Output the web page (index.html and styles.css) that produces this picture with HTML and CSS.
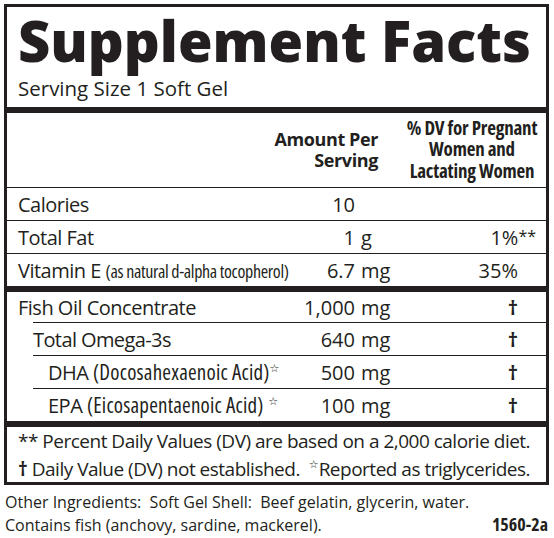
FILE: index.html
```html
<!DOCTYPE html>
<html lang="en">
<head>
    <meta charset="UTF-8" />
    <meta name="viewport" content="width=device-width, initial-scale=1.0" />
    <title>Supplement Facts</title>
    <link rel="stylesheet" href="styles.css">
</head>
<body>
    <div class="label">
      <div class="label-top">
        <h1 class="title">Supplement Facts</h1>
        <p class="serving">Serving Size 1 Soft Gel</p>
      </div>

      <!-- Column headings -->
      <div class="col-head">
        <div class="col-amount">Amount Per<br>Serving</div>
        <div class="col-dv">% DV for Pregnant<br>Women and<br>Lactating Women</div>
      </div>

      <div class="group">
        <div class="row">
          <span class="name">Calories</span>
          <span class="num">10</span>
          <span class="unit"></span>
          <span class="dv"></span>
        </div>
        <div class="row">
          <span class="name">Total Fat</span>
          <span class="num">1</span>
          <span class="unit">g</span>
          <span class="dv">1%<span class="dv-note">**</span></span>
        </div>
        <div class="row">
          <span class="name">Vitamin E <span class="paren">(as natural d-alpha tocopherol)</span></span>
          <span class="num">6.7</span>
          <span class="unit">mg</span>
          <span class="dv">35%</span>
        </div>
      </div>

      <div class="group group-thick">
        <div class="row">
          <span class="name">Fish Oil Concentrate</span>
          <span class="num">1,000</span>
          <span class="unit">mg</span>
          <span class="dv"><span class="dagger">†</span></span>
        </div>
        <div class="row sub">
          <span class="name tight">Total Omega-3s</span>
          <span class="num">640</span>
          <span class="unit">mg</span>
          <span class="dv"><span class="dagger">†</span></span>
        </div>
        <div class="row sub sub-2">
          <span class="name">DHA <span class="paren paren-wide">(Docosahexaenoic Acid)</span><span class="star">☆</span></span>
          <span class="num">500</span>
          <span class="unit">mg</span>
          <span class="dv"><span class="dagger">†</span></span>
        </div>
        <div class="row sub sub-2">
          <span class="name">EPA <span class="paren paren-wide">(Eicosapentaenoic Acid)</span> <span class="star">☆</span></span>
          <span class="num">100</span>
          <span class="unit">mg</span>
          <span class="dv"><span class="dagger">†</span></span>
        </div>
      </div>

      <div class="notes">
        <p>** Percent Daily Values (DV) are based on a 2,000 calorie diet.</p>
        <p><span class="dagger">†</span> Daily Value (DV) not established.&nbsp; <span class="star">☆</span>Reported as triglycerides.</p>
      </div>
    </div>

    <div class="other">
      <p>Other Ingredients:&nbsp; Soft Gel Shell:&nbsp; Beef gelatin, glycerin, water.</p>
      <p class="other-last">
        <span>Contains fish (anchovy, sardine, mackerel).</span>
        <span class="code">1560-2a</span>
      </p>
    </div>
</body>
</html>
```

FILE: styles.css
```css
* {
  margin: 0;
  padding: 0;
  box-sizing: border-box;
}

body {
  font-family: "Open Sans", "Liberation Sans", sans-serif;
  color: #231f20;
  background-color: #ffffff;
}

/* Outer label box */
.label {
  margin: 4px 5px 0 4px;
  border: 3px solid #231f20;
}

.label-top {
  height: 106px;
  padding: 3px 11px 0;
  border-bottom: 6px solid #231f20;
}

.title {
  font-size: 56px;
  font-weight: 800;
  line-height: 60px;
}

.serving {
  padding-top: 3px;
  font-size: 20.5px;
  line-height: 30px;
}

/* Column headings */
.col-head {
  display: grid;
  grid-template-columns: 1fr 148px;
  align-items: center;
  height: 75px;
  border-bottom: 1px solid #231f20;
  font-size: 19px;
  font-weight: 700;
  line-height: 21.5px;
}

.col-amount {
  text-align: right;
  padding-right: 20px;
  font-size: 18px;
  letter-spacing: -0.4px;
}

.col-dv {
  text-align: center;
  font-stretch: condensed;
  letter-spacing: -0.2px;
}

/* Nutrient rows */
.group-thick {
  border-top: 6px solid #231f20;
}

.row {
  display: grid;
  grid-template-columns: 1fr 52px 43px 148px;
  align-items: center;
  height: 33px;
  font-size: 20px;
  border-bottom: 1px solid #231f20;
}

.row:last-child {
  height: 32px;
  border-bottom: none;
}

.group-thick .row {
  height: 30px;
  border-bottom: none;
}

.group-thick .row.sub {
  margin-left: 26px;
  border-top: 1px solid #231f20;
  height: 33px;
}

.name {
  padding-left: 11px;
  white-space: nowrap;
  letter-spacing: -0.5px;
}

.sub .name {
  padding-left: 0;
}

.sub-2 .name {
  padding-left: 15px;
}

.tight {
  letter-spacing: -0.6px;
}

.paren {
  font-size: 18px;
  font-stretch: condensed;
  letter-spacing: -0.35px;
}

.paren-wide {
  font-size: 21px;
  letter-spacing: 0.2px;
}

.star {
  font-family: "DejaVu Sans", sans-serif;
  font-size: 11px;
  letter-spacing: 0;
  vertical-align: 8px;
}

.num {
  text-align: right;
}

.unit {
  padding-left: 6px;
}

.dv {
  text-align: right;
  padding-right: 28px;
}

.dv-note {
  font-size: 16px;
  vertical-align: 3px;
  margin-right: -18px;
}

.dagger {
  font-weight: 700;
}

/* Footnotes */
.notes {
  height: 61px;
  padding: 2px 11px 0;
  border-top: 6px solid #231f20;
  font-size: 19px;
  letter-spacing: -0.5px;
  line-height: 24px;
  white-space: nowrap;
}

/* Ingredients under the box */
.other {
  padding: 6px 6px 0 5px;
  font-size: 16px;
  line-height: 22px;
}

.other-last {
  display: flex;
  justify-content: space-between;
  align-items: baseline;
}

.code {
  font-size: 18px;
  font-weight: 700;
  font-stretch: condensed;
}
```
